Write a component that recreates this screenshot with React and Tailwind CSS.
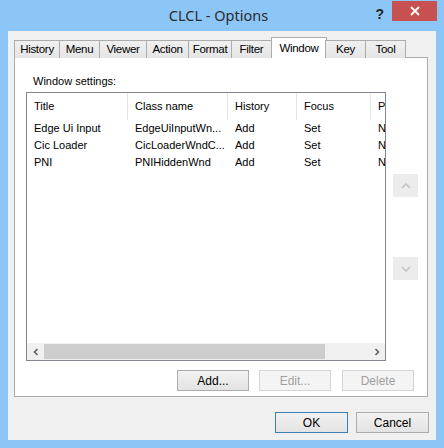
import React from 'react';

const tabs = [
  { label: 'History', w: 'w-[46px]' },
  { label: 'Menu', w: 'w-[41px]' },
  { label: 'Viewer', w: 'w-[48px]' },
  { label: 'Action', w: 'w-[43px]' },
  { label: 'Format', w: 'w-[44px]' },
  { label: 'Filter', w: 'w-[41px]' },
  { label: 'Window', w: 'w-[56px]', active: true },
  { label: 'Key', w: 'w-[41px]' },
  { label: 'Tool', w: 'w-[41px]' },
];

const rows = [
  ['Edge Ui Input', 'EdgeUiInputWn...', 'Add', 'Set', 'No'],
  ['Cic Loader', 'CicLoaderWndC...', 'Add', 'Set', 'No'],
  ['PNI', 'PNIHiddenWnd', 'Add', 'Set', 'No'],
];

const cols = ['w-[101px]', 'w-[100px]', 'w-[69px]', 'w-[74px]', 'w-[60px]'];
const heads = ['Title', 'Class name', 'History', 'Focus', 'Paste'];

function Button({ children, disabled, primary, className }) {
  return (
    <div
      className={`h-[21px] flex items-center justify-center text-[12px] border ${
        disabled
          ? 'border-[#d5d5d5] bg-[#f4f4f4] text-[#a0a0a0]'
          : primary
          ? 'border-[#3c7fb1] bg-gradient-to-b from-[#f2f2f2] to-[#e3e3e3] text-black'
          : 'border-[#acacac] bg-gradient-to-b from-[#f2f2f2] to-[#e3e3e3] text-black'
      } ${className}`}
    >
      {children}
    </div>
  );
}

export default function App() {
  return (
    <div
      className="w-[444px] h-[448px] bg-[#8bc6f7] flex flex-col px-[8px] pb-[8px]"
      style={{ fontFamily: '"Liberation Sans", Arial, sans-serif' }}
    >
      {/* title bar */}
      <div className="h-[31px] flex items-start -mx-[8px] pr-[7px]">
        <div className="flex-1" />
        <div
          className="pt-[5px] text-[14.5px] text-[#2b2b2b] leading-[20px]"
          style={{ fontFamily: '"Noto Sans", "Open Sans", sans-serif' }}
        >
          CLCL - Options
        </div>
        <div className="flex-1 flex justify-end items-start">
          <div className="mt-[6px] mr-[8px] text-[14px] font-bold text-[#222] leading-[16px]">?</div>
          <div className="mt-[1px] w-[45px] h-[20px] bg-[#c75050] flex items-center justify-center">
            <svg width="10" height="10" viewBox="0 0 10 10">
              <path d="M1 1 L9 9 M9 1 L1 9" stroke="white" strokeWidth="1.8" />
            </svg>
          </div>
        </div>
      </div>

      {/* client */}
      <div className="flex-1 bg-[#f0f0f0] flex flex-col pl-[6px] pr-[8px] pt-[7px]">
        {/* tabs */}
        <div className="flex items-end h-[20px] pl-[1px] relative z-10">
          {tabs.map((t) =>
            t.active ? (
              <div
                key={t.label}
                className={`${t.w} h-[21px] -ml-px -mr-[1px] bg-white border border-b-0 border-[#acacac] flex items-start justify-center pt-[2px] text-[11.5px] tracking-[-0.3px] text-black`}
              >
                {t.label}
              </div>
            ) : (
              <div
                key={t.label}
                className={`${t.w} h-[18px] -ml-px bg-gradient-to-b from-[#f0f0f0] to-[#e5e5e5] border border-b-0 border-[#acacac] flex items-center justify-center text-[11.5px] tracking-[-0.3px] text-black`}
              >
                {t.label}
              </div>
            )
          )}
        </div>

        {/* panel */}
        <div className="h-[340px] -mt-px border border-[#acacac] bg-white flex flex-col text-[11px] text-black">
          <div className="pl-[18px] pt-[17px] h-[34px] leading-[13px]">Window settings:</div>
          <div className="flex">
            {/* list */}
            <div className="ml-[11px] w-[360px] h-[269px] border border-[#828790] bg-white flex flex-col overflow-hidden">
              <div className="flex-1 overflow-hidden">
                <div className="flex h-[27px] w-[420px]">
                  {heads.map((h, i) => (
                    <div
                      key={h}
                      className={`${cols[i]} shrink-0 pl-[7px] flex items-center border-r border-[#e5e5e5]`}
                    >
                      {h}
                    </div>
                  ))}
                </div>
                {rows.map((r) => (
                  <div key={r[0]} className="flex h-[17px] w-[420px] items-center">
                    {r.map((c, i) => (
                      <div key={i} className={`${cols[i]} shrink-0 pl-[7px] whitespace-nowrap overflow-hidden`}>
                        {c}
                      </div>
                    ))}
                  </div>
                ))}
              </div>
              {/* horizontal scrollbar */}
              <div className="h-[17px] bg-[#f0f0f0] flex items-stretch">
                <div className="w-[17px] flex items-center justify-center">
                  <svg width="6" height="8" viewBox="0 0 6 8">
                    <path d="M4.5 1 L1.5 4 L4.5 7" stroke="#606060" strokeWidth="1.6" fill="none" />
                  </svg>
                </div>
                <div className="w-[281px] my-[1px] bg-[#cdcdcd]" />
                <div className="flex-1" />
                <div className="w-[17px] flex items-center justify-center">
                  <svg width="6" height="8" viewBox="0 0 6 8">
                    <path d="M1.5 1 L4.5 4 L1.5 7" stroke="#606060" strokeWidth="1.6" fill="none" />
                  </svg>
                </div>
              </div>
            </div>
            {/* spin buttons */}
            <div className="ml-[7px] flex flex-col pt-[82px]">
              <div className="w-[25px] h-[23px] bg-[#ececec] flex items-center justify-center">
                <svg width="10" height="6" viewBox="0 0 10 6">
                  <path d="M1 5 L5 1 L9 5" stroke="#c4c4c4" strokeWidth="1.6" fill="none" />
                </svg>
              </div>
              <div className="w-[25px] h-[23px] mt-[60px] bg-[#ececec] flex items-center justify-center">
                <svg width="10" height="6" viewBox="0 0 10 6">
                  <path d="M1 1 L5 5 L9 1" stroke="#c4c4c4" strokeWidth="1.6" fill="none" />
                </svg>
              </div>
            </div>
          </div>
          <div className="flex mt-[9px] pl-[162px]">
            <Button className="w-[72px]">Add...</Button>
            <Button disabled className="w-[72px] ml-[10px]">Edit...</Button>
            <Button disabled className="w-[72px] ml-[11px]">Delete</Button>
          </div>
        </div>

        {/* dialog buttons */}
        <div className="flex justify-end mt-[15px]">
          <Button primary className="w-[73px]">OK</Button>
          <Button className="w-[73px] ml-[8px] -mr-[1px]">Cancel</Button>
        </div>
      </div>
    </div>
  );
}
